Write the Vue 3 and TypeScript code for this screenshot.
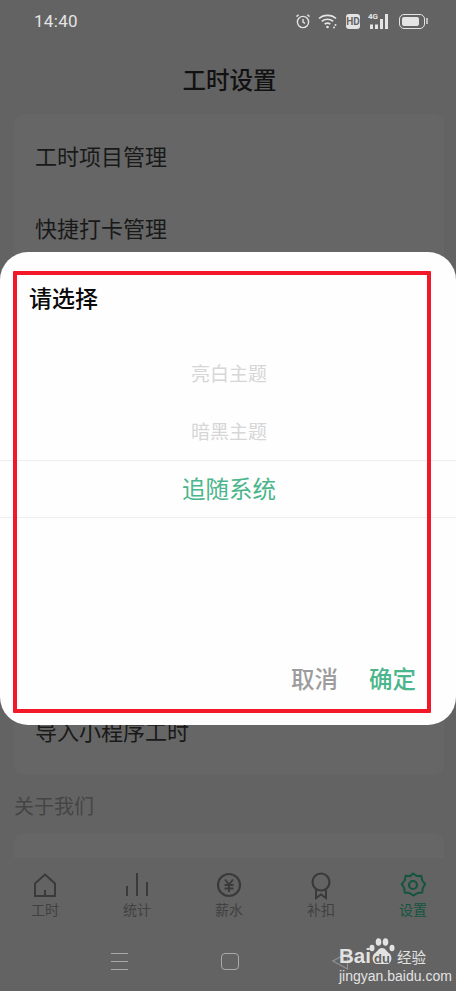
<template>
  <div class="page">
    <div class="status-bar">
      <span class="time">14:40</span>
      <div class="status-icons">
        <svg class="alarm" width="16" height="16" viewBox="0 0 16 16" fill="none" stroke="#e4e4e4" stroke-width="1.4">
          <circle cx="8" cy="9" r="5.6" />
          <path d="M8 6v3.2l2 1.2M1.5 3.6 3.6 1.8M14.5 3.6 12.4 1.8" />
        </svg>
        <svg width="20" height="16" viewBox="0 0 20 16" fill="none" stroke="#e4e4e4" stroke-width="1.6">
          <path d="M1 5.500C5.500 1.300 13.500 1.300 18 5.500M3.800 8.400C7 5.600 12 5.600 15.200 8.400M6.600 11.200C8.300 9.900 10.700 9.900 12.400 11.200" />
          <circle cx="9.500" cy="14" r="1.300" fill="#e4e4e4" stroke="none" />
          <circle cx="17.500" cy="12" r="1" fill="#e4e4e4" stroke="none" />
          <circle cx="16" cy="14.500" r="1" fill="#e4e4e4" stroke="none" />
        </svg>
        <span class="hd">HD</span>
        <div class="signal">
          <span class="net">4G</span>
          <svg width="21" height="15" viewBox="0 0 21 15" fill="#e4e4e4">
            <rect x="2" y="10.500" width="3" height="4.500" />
            <rect x="7" y="10.500" width="3" height="4.500" />
            <rect x="12" y="5" width="3" height="10" />
            <rect x="17" y="0" width="3" height="15" />
          </svg>
        </div>
        <div class="battery"><div class="battery-fill"></div></div>
      </div>
    </div>

    <div class="header">工时设置</div>

    <div class="card main-card">
      <div v-for="(row, i) in rows" :key="i" class="row">{{ row }}</div>
    </div>

    <div class="section-title">关于我们</div>
    <div class="card about-card"></div>

    <div class="tabbar">
      <div v-for="tab in tabs" :key="tab.label" class="tab" :class="{ active: tab.active }">
        <svg width="30" height="30" viewBox="0 0 30 30" fill="none" stroke="currentColor" stroke-width="2" v-html="tab.icon"></svg>
        <span>{{ tab.label }}</span>
      </div>
    </div>

    <div class="navbar">
      <div class="nav-lines"><i></i><i></i><i></i></div>
      <div class="nav-home"></div>
      <svg class="nav-back" width="17" height="18" viewBox="0 0 17 18" fill="none" stroke="#8f8f8f" stroke-width="1.2">
        <path d="M15.500 1 1 9l14.500 8z" />
      </svg>
    </div>

    <div class="sheet">
      <div class="sheet-title">请选择</div>
      <div class="picker">
        <div class="option">亮白主题</div>
        <div class="option">暗黑主题</div>
        <div class="option selected">追随系统</div>
      </div>
      <div class="sheet-actions">
        <span class="cancel">取消</span>
        <span class="ok">确定</span>
      </div>
    </div>

    <div class="red-box"></div>

    <div class="watermark">
      <div class="wm-top">
        <span class="wm-bai">Bai</span>
        <svg class="wm-paw" width="26" height="28" viewBox="0 0 26 28" fill="#e2e2e2">
          <ellipse cx="3" cy="10" rx="2.500" ry="3.200" />
          <ellipse cx="9.500" cy="4" rx="2.800" ry="3.800" />
          <ellipse cx="16.500" cy="4" rx="2.800" ry="3.800" />
          <ellipse cx="23" cy="10" rx="2.500" ry="3.200" />
          <path d="M13 10c3.500 0 4.500 3.500 7.500 5.500 3 2.500 2.500 10-2 10.500H7.500c-4.500-.5-5-8-2-10.500C8.500 13.500 9.500 10 13 10z" />
        </svg>
        <span class="wm-du">du</span>
        <span class="wm-jy">经验</span>
      </div>
      <div class="wm-url">jingyan.baidu.com</div>
    </div>
  </div>
</template>

<script setup lang="ts">
interface Tab {
  label: string;
  icon: string;
  active?: boolean;
}

// the rows between 快捷打卡管理 and 导入小程序工时 sit behind the sheet
const rows: string[] = ["工时项目管理", "快捷打卡管理", "", "", "", "", "", "", "导入小程序工时"];

const tabs: Tab[] = [
  { label: "工时", icon: '<path d="M5 13.500 15 4.500l10 9V26H5zM15 26v-6" />' },
  { label: "统计", icon: '<path d="M5 26v-10M15 26V3M25 26V12" />' },
  {
    label: "薪水",
    icon: '<circle cx="15" cy="15" r="11" stroke-width="2.200" /><path d="M11 9.500l4 5 4-5M10.500 15h9M10.500 18.500h9M15 14.500V22" />',
  },
  {
    label: "补扣",
    icon: '<circle cx="15" cy="12" r="8.500" stroke-width="2.200" /><path d="M10 19.500V28l5-3.500 5 3.500v-8.500" />',
  },
  {
    label: "设置",
    active: true,
    icon: '<path d="M15 3.500l3.800 2.600 4.500-.3.900 4.500 3 3.700-2.400 4 -.6 4.600-4.500.4-4.200 2.500-4.200-2.500-4.500-.4-.6-4.600-2.400-4 3-3.700.9-4.500 4.500.3z" /><circle cx="15" cy="15" r="4" stroke-width="2.200" />',
  },
];
</script>

<style>
html,
body {
  margin: 0;
  background: #636363;
}
</style>

<style scoped>
.page {
  position: relative;
  width: 456px;
  height: 991px;
  overflow: hidden;
  display: flex;
  flex-direction: column;
  background: #636363;
  color: #191919;
  font-family: "Noto Sans CJK SC", "Noto Sans", sans-serif;
}
.status-bar {
  height: 42px;
  flex: none;
  display: flex;
  align-items: center;
  justify-content: space-between;
  padding: 0 31px 0 34px;
  color: #e4e4e4;
}
.time {
  font-family: Roboto, sans-serif;
  font-size: 17px;
  letter-spacing: 0.3px;
}
.status-icons {
  display: flex;
  align-items: center;
  gap: 8px;
}
.alarm {
  margin-right: -1px;
}
.hd {
  width: 14px;
  height: 15px;
  border-radius: 3px;
  background: #e4e4e4;
  color: #636363;
  font-family: Roboto, sans-serif;
  font-size: 10px;
  font-weight: 700;
  line-height: 15px;
  text-align: center;
}
.signal {
  position: relative;
  width: 21px;
  height: 15px;
}
.signal svg {
  display: block;
}
.net {
  position: absolute;
  left: 0;
  top: -2px;
  color: #e4e4e4;
  font-family: Roboto, sans-serif;
  font-size: 8px;
  font-weight: 700;
  line-height: 10px;
}
.battery {
  position: relative;
  box-sizing: border-box;
  width: 26px;
  height: 15px;
  margin-left: 2px;
  padding: 2px;
  border: 1.500px solid #e4e4e4;
  border-radius: 5px;
}
.battery::after {
  content: "";
  position: absolute;
  right: -3.500px;
  top: 3px;
  width: 2px;
  height: 6px;
  background: #bdbdbd;
}
.battery-fill {
  width: 17px;
  height: 100%;
  border-radius: 2px;
  background: #e4e4e4;
}
.header {
  height: 72px;
  flex: none;
  display: flex;
  align-items: center;
  justify-content: center;
  padding: 4px 0 0 3px;
  box-sizing: border-box;
  font-size: 23.500px;
  font-weight: 500;
  line-height: 1;
  color: #111;
}
.card {
  margin: 0 12px 0 14px;
  border-radius: 10px;
  background: #666666;
  flex: none;
}
.main-card {
  padding: 7px 0;
}
.row {
  box-sizing: border-box;
  height: 71.875px;
  display: flex;
  align-items: center;
  padding: 0 0 4px 21px;
  font-size: 22px;
  line-height: 1;
}
.section-title {
  height: 58px;
  flex: none;
  display: flex;
  align-items: center;
  padding: 3px 0 0 14px;
  box-sizing: border-box;
  font-size: 20px;
  color: #454545;
}
.about-card {
  height: 40px;
  margin-bottom: -15px;
}
.tabbar {
  position: relative;
  flex: none;
  display: grid;
  grid-template-columns: repeat(5, 92px);
  width: 460px;
  margin-left: -1px;
  height: 74px;
  background: #636363;
  color: #3a3a3a;
}
.tab {
  display: flex;
  flex-direction: column;
  align-items: center;
  padding-top: 12px;
}
.tab svg {
  display: block;
}
.tab span {
  margin-top: -1px;
  font-size: 14px;
  line-height: 20px;
  color: #414141;
}
.tab.active,
.tab.active span {
  color: #14553f;
}
.navbar {
  position: relative;
  flex: 1;
  display: flex;
  align-items: center;
  background: #636363;
  padding: 0 0 0 111px;
}
.nav-lines {
  display: flex;
  flex-direction: column;
  gap: 6.500px;
  width: 17px;
}
.nav-lines i {
  display: block;
  height: 1.500px;
  background: #a8a8a8;
}
.nav-home {
  box-sizing: border-box;
  width: 18px;
  height: 17px;
  margin-left: 93px;
  border: 1.500px solid #a8a8a8;
  border-radius: 4px;
}
.nav-back {
  margin-left: 93px;
}
.sheet {
  position: absolute;
  left: 0;
  right: 0;
  top: 252px;
  height: 473px;
  box-sizing: border-box;
  display: flex;
  flex-direction: column;
  padding: 30px 0 27px;
  border-radius: 28px;
  background: #fefefe;
}
.sheet-title {
  padding-left: 29px;
  font-size: 23px;
  font-weight: 500;
  line-height: 30px;
  color: #0a0a0a;
}
.picker {
  margin-top: 32px;
}
.option {
  box-sizing: border-box;
  height: 58px;
  display: flex;
  align-items: center;
  justify-content: center;
  padding: 0 0 2px 2px;
  font-size: 19px;
  color: #d6d6d6;
}
.option.selected {
  border-top: 1px solid #eeeeee;
  border-bottom: 1px solid #eeeeee;
  font-size: 23.500px;
  color: #4bb58b;
}
.sheet-actions {
  margin-top: auto;
  height: 40px;
  display: flex;
  align-items: center;
  justify-content: flex-end;
  gap: 31px;
  padding-right: 40px;
  font-size: 23.500px;
  font-weight: 500;
}
.cancel {
  color: #9c9c9c;
}
.ok {
  color: #4bb58b;
}
.red-box {
  position: absolute;
  left: 13px;
  top: 271px;
  width: 418px;
  height: 442px;
  box-sizing: border-box;
  border: 4px solid #f2182a;
  border-radius: 1px;
}
.watermark {
  position: absolute;
  left: 339px;
  top: 938px;
  width: 92px;
  color: #e2e2e2;
  font-family: "Liberation Sans", sans-serif;
}
.wm-top {
  position: relative;
  height: 28px;
}
.wm-bai {
  position: absolute;
  left: 0;
  top: 9px;
  font-size: 20.500px;
  font-weight: 700;
  line-height: 18px;
}
.wm-paw {
  position: absolute;
  left: 30px;
  top: 0;
}
.wm-du {
  position: absolute;
  left: 35px;
  top: 14px;
  color: #636363;
  font-size: 13px;
  font-weight: 700;
  line-height: 14px;
}
.wm-jy {
  position: absolute;
  left: 58px;
  top: 11px;
  font-family: "Noto Sans CJK SC", sans-serif;
  font-size: 14.500px;
  line-height: 16px;
}
.wm-url {
  margin-top: 2px;
  font-size: 14px;
  line-height: 16px;
  white-space: nowrap;
}
</style>
